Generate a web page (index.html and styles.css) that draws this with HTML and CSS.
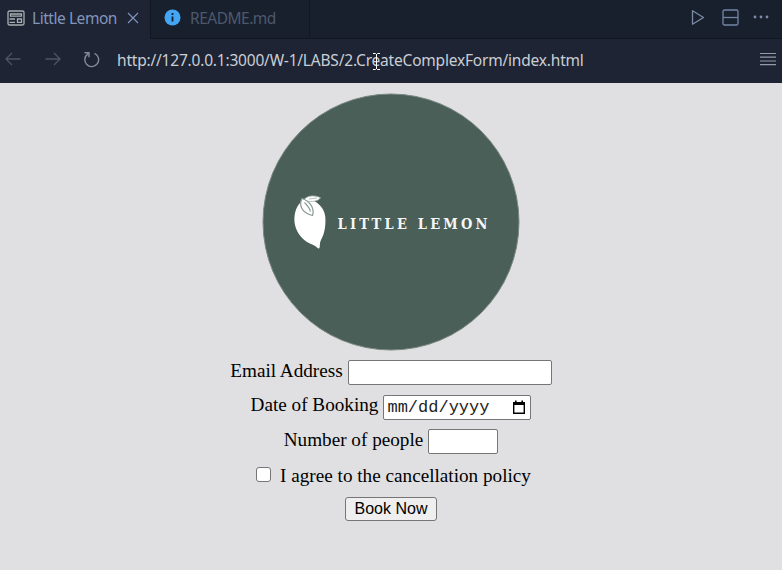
FILE: index.html
```
<!DOCTYPE html>
<html lang="en">
<head>
<meta charset="utf-8">
<title>Little Lemon</title>
<link rel="stylesheet" href="styles.css">
</head>
<body>
<header class="tabs">
  <div class="tab tab-active">
    <svg class="page-icon" width="18" height="16" viewBox="0 0 18 16" fill="none" stroke="#a9adb3" stroke-width="1.3"><rect x="1" y="1" width="16" height="14" rx="1.5"/><path d="M3.5 4h11v2.2h-11zM2.5 9h5.5M2.5 12.3h5.5M10.5 9h4v3.3h-4z"/></svg>
    <span class="tab-name">Little Lemon</span>
    <svg class="close" width="12" height="12" viewBox="0 0 12 12" stroke="#8296c0" stroke-width="1.1"><path d="M1 1l10 10M11 1L1 11"/></svg>
  </div>
  <div class="tab tab-readme">
    <svg class="info" width="17" height="17" viewBox="0 0 17 17"><circle cx="8.5" cy="8.5" r="8" fill="#42a5f5"/><path d="M8.5 4v2M8.5 7.5v5" stroke="#19202d" stroke-width="1.8"/></svg>
    <span class="readme-name">README.md</span>
  </div>
  <div class="tools">
    <svg width="14" height="17" viewBox="0 0 14 17" fill="none" stroke="#7b8ba5" stroke-width="1.3"><path d="M1.5 1.8v13.4L12.5 8.5z" stroke-linejoin="round"/></svg>
    <svg class="split" width="17" height="17" viewBox="0 0 17 17" fill="none" stroke="#7185a5" stroke-width="1.3"><rect x="1" y="1" width="15" height="15" rx="1.5"/><path d="M1 8.5h15"/></svg>
    <svg class="more" width="16" height="4" viewBox="0 0 16 4" fill="#7b8ba5"><circle cx="2" cy="2" r="1.4"/><circle cx="8" cy="2" r="1.4"/><circle cx="14" cy="2" r="1.4"/></svg>
  </div>
</header>
<nav class="bar">
  <svg class="back" width="16" height="14" viewBox="0 0 16 14" fill="none" stroke="#4b5565" stroke-width="1.3"><path d="M15.5 7H1M7 1L1 7l6 6"/></svg>
  <svg class="forward" width="16" height="14" viewBox="0 0 16 14" fill="none" stroke="#4b5565" stroke-width="1.3"><path d="M.5 7H15M9 1l6 6-6 6"/></svg>
  <svg class="reload" width="17" height="17" viewBox="0 0 17 17" fill="none" stroke="#858d99" stroke-width="1.4"><path d="M11.5 2.4A6.9 6.9 0 1 1 5 2.9M1.5 1.7H6v4.5"/></svg>
  <div class="address"><span class="url">http://127.0.0.1:3000/W-1/LABS/2.CreateComplexForm/index.html</span>
    <svg class="caret" width="9" height="17" viewBox="0 0 9 17" fill="none" stroke="#fff"><path d="M1 .5h2.5l1 1 1-1H8M1 16.5h2.5l1-1 1 1H8M4.5 1v15"/></svg>
  </div>
  <svg class="menu" width="16" height="14" viewBox="0 0 16 14" stroke="#939aa5" stroke-width="1.2"><path d="M0 1.5h16M0 5.2h16M0 9h16M0 12.7h16"/></svg>
</nav>
<main class="page">
  <svg class="logo" width="258" height="258" viewBox="0 0 258 258">
    <circle cx="129" cy="129" r="128" fill="#4a5f57" stroke="#788780" stroke-width="1"/>
    <path d="M38 110C33.500 115 32 122 32.500 129C33.500 138 38.500 144.500 45 149C49 151.500 53 152 55 154.500C56 155.500 57 155.800 57.500 155C58.200 152 57.500 150 59 147C63 140 64 131 63.200 123C62 115 56.500 110 51 107.500C46 106 42 107 38 110z" fill="#fff"/>
    <path d="M42 106.500C46 102 53 102 58.500 104.800C56 108.500 50 109 44 108z" fill="#fff" stroke="#a4b0ab" stroke-width=".8"/>
    <path d="M47 106L55 105" stroke="#a4b0ab" stroke-width=".8"/>
    <path d="M40 105.500C37 111 38.500 119.500 50.500 122.500C53 115 47.500 108 40 105.500z" fill="#fff" stroke="#8a9993" stroke-width="1.200"/>
    <path d="M42.500 109.500C45 112 47.500 115 48.500 118.500" fill="none" stroke="#8a9993" stroke-width="1.100"/>
    <text class="brand" x="75.5" y="136" textLength="150">LITTLE LEMON</text>
  </svg>
  <form class="form">
    <div class="row email"><label for="email">Email Address</label><input class="field" id="email" type="text"></div>
    <div class="row date"><span class="date-label">Date of Booking</span><div class="field date-field"><span class="date-hint">mm/dd/yyyy</span>
      <svg width="14" height="15" viewBox="0 0 14 15"><path d="M1.7 3h10.6v10.3H1.7z" fill="none" stroke="#000" stroke-width="1.4"/><path d="M1 2h12v3H1zM3 .5h1.6V3H3zM9.4.5H11V3H9.4z"/></svg></div></div>
    <div class="row people"><label for="people">Number of people</label><input class="field" id="people" type="text"></div>
    <div class="row agree"><input class="check" id="agree" type="checkbox"><label for="agree">I agree to the cancellation policy</label></div>
    <button class="book" type="button">Book Now</button>
  </form>
</main>
</body>
</html>
```
FILE: styles.css
```
* { box-sizing: border-box; }
body { margin: 0; height: 570px; overflow: hidden; background: #e0e0e2; }
svg { display: block; flex: none; }
.tabs { display: flex; height: 39px; background: #19202d; border-bottom: 1px solid #121821; font: 16px "Noto Sans", sans-serif; }
.tab { display: flex; align-items: center; height: 38px; border-right: 1px solid #121821; white-space: nowrap; }
.tab-active { width: 151px; height: 39px; padding: 0 0 3px 7px; background: #1e2433; color: #8296bd; }
.tab-name { width: 85px; margin-left: 7px; font-size: 15.5px; letter-spacing: -.45px; }
.close { margin-left: 10px; }
.tab-readme { width: 159px; padding: 0 0 3px 13px; color: #4c596d; }
.readme-name { margin-left: 9px; font-size: 15.5px; letter-spacing: -.5px; }
.tools { display: flex; align-items: center; margin-left: auto; padding: 0 13px 4px 0; }
.split { margin-left: 17px; }
.more { margin-left: 14px; }
.bar { display: flex; align-items: center; height: 44px; padding: 0 6px 4px 5px; background: #1e2433; }
.forward { margin-left: 24px; }
.reload { margin-left: 22px; }
.address { position: relative; margin: 1px 0 0 17px; color: #c9ced6; font: 15.5px "Noto Sans", sans-serif; letter-spacing: -.2px; white-space: nowrap; }
.caret { position: absolute; left: 255px; top: 4px; }
.menu { margin-left: auto; }
.page { display: flex; flex-direction: column; align-items: center; padding-top: 10px; color: #000; font: 19.2px "Liberation Serif", serif; }
.brand { fill: #f5f7f6; font: bold 14.5px "DejaVu Serif Condensed", "DejaVu Serif", serif; font-stretch: condensed; }
.form { display: flex; flex-direction: column; align-items: center; margin-top: 9px; }
.row { display: flex; align-items: center; height: 25px; gap: 5px; line-height: 22px; white-space: nowrap; }
.row > label { margin-top: -3px; }
.date-label { margin-top: -5px; }
.field { height: 25px; margin: 0; padding: 0 4px; border: 1px solid #767676; border-radius: 2px; background: #fff; }
#email { width: 204px; }
.date { margin-top: 10px; }
.date-field { display: flex; align-items: center; justify-content: space-between; width: 148px; padding-left: 3px; font: 17px "Liberation Mono", monospace; }
.date-hint { color: #222; }
.people { margin-top: 9px; }
#people { width: 70px; }
.agree { margin-top: 9px; gap: 9px; padding-left: 5px; }
.check { appearance: none; width: 15px; height: 15px; margin: -3px 0 0; border: 1px solid #767676; border-radius: 3px; background: #fff; }
.row.agree > label { margin-top: 0; }
.book { width: 92px; height: 24px; margin-top: 9px; padding: 0; border: 1px solid #767676; border-radius: 3px; background: #efefef; color: #000; font: 16px "Liberation Sans", sans-serif; }
```
